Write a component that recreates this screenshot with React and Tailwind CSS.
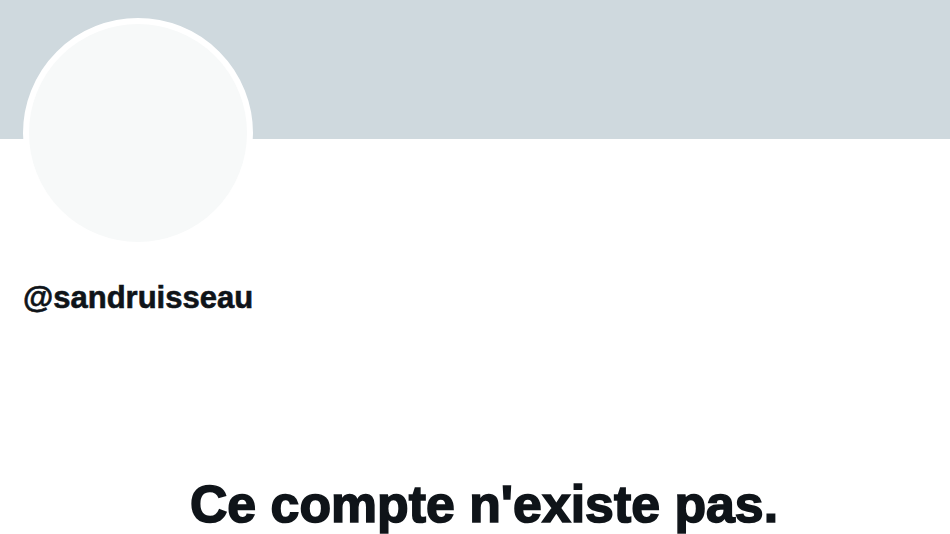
import React from "react";

const App = () => {
  return (
    <div className="w-[950px] h-[534px] overflow-hidden bg-white font-['Liberation_Sans',Arial,sans-serif] text-[#0f1419]">
      <div className="h-[139px] bg-[#cfd9de]" />
      <div className="-mt-[121px] ml-[23px] w-[230px] h-[230px] rounded-full border-[6px] border-white bg-[#f7f9f9]" />
      <div className="mt-[32px] ml-[23px] text-[31px] leading-[36px] font-bold [-webkit-text-stroke:0.6px_#0f1419]">
        @sandruisseau
      </div>
      <div className="mt-[158px] pl-[18px] flex justify-center">
        <h1 className="text-[51.8px] leading-[60px] font-bold [-webkit-text-stroke:1.6px_#0f1419]">
          Ce compte n'existe pas.
        </h1>
      </div>
    </div>
  );
};

export default App;
